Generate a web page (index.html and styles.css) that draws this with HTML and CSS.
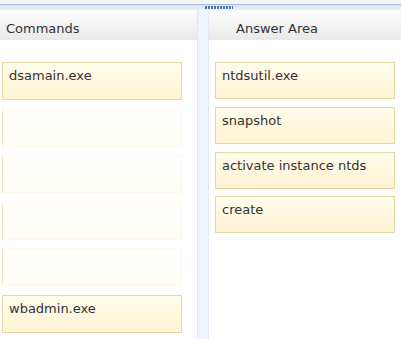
FILE: index.html
```html
<!DOCTYPE html>
<html>
<head>
<meta charset="utf-8">
<link rel="stylesheet" href="styles.css">
</head>
<body>
<div class="topgap"></div>
<div class="splitter"><span class="grip"></span></div>
<div class="columns">
  <section class="col col-left">
    <div class="head head-left">Commands</div>
    <div class="list list-left">
      <div class="item">dsamain.exe</div>
      <div class="slot"></div>
      <div class="slot"></div>
      <div class="slot"></div>
      <div class="slot"></div>
      <div class="item">wbadmin.exe</div>
    </div>
  </section>
  <div class="divider"></div>
  <section class="col col-right">
    <div class="head head-right">Answer Area</div>
    <div class="list list-right">
      <div class="item item-r">ntdsutil.exe</div>
      <div class="item item-r">snapshot</div>
      <div class="item item-r">activate instance ntds</div>
      <div class="item item-r">create</div>
    </div>
  </section>
</div>
</body>
</html>
```
FILE: styles.css
```css
html, body {
  margin: 0;
  padding: 0;
  background: #ffffff;
  font-family: "DejaVu Sans", Verdana, sans-serif;
  color: #333333;
  width: 401px;
  height: 339px;
  overflow: hidden;
}
.topgap {
  height: 4px;
  background: #f3f5f7;
}
.splitter {
  height: 5px;
  border-top: 1px solid #a9c0da;
  background: linear-gradient(#d3e2f3, #eaf2fb);
  display: flex;
  padding-left: 205px;
  align-items: center;
}
.grip {
  width: 28px;
  height: 3px;
  background: repeating-linear-gradient(90deg, #4f79a8 0 2px, transparent 2px 3px);
}
.columns {
  display: flex;
  height: 329px;
}
.col-left {
  width: 197px;
}
.col-right {
  flex: 1;
}
.divider {
  width: 10px;
  background: #eef5fd;
  border-left: 1px solid #dde7f2;
  border-right: 1px solid #e1eaf4;
}
.head {
  height: 27px;
  padding-top: 3px;
  line-height: 32px;
  font-size: 13px;
  color: #333;
  background: linear-gradient(#fdfdfd, #e9e9e9);
}
.head-left { padding-left: 6px; }
.head-right { padding-left: 27px; }
.list {
  display: flex;
  flex-direction: column;
  padding-top: 22px;
}
.list-left {
  padding-left: 2px;
  width: 180px;
  gap: 8.6px;
}
.list-right {
  padding-left: 6px;
  width: 180px;
  gap: 7.8px;
}
.item {
  box-sizing: border-box;
  height: 38px;
  border: 1px solid #e4d9a6;
  background: linear-gradient(#fffcec, #fff3d3);
  font-size: 13px;
  line-height: 15px;
  padding: 5px 6px 0;
  color: #333;
}
.item-r {
  height: 37px;
}
.slot {
  box-sizing: border-box;
  height: 38px;
  border: 1px solid #fcf8ea;
  border-left-color: #f1e7bf;
  background: linear-gradient(#fffefb, #fffdf6);
}
```
